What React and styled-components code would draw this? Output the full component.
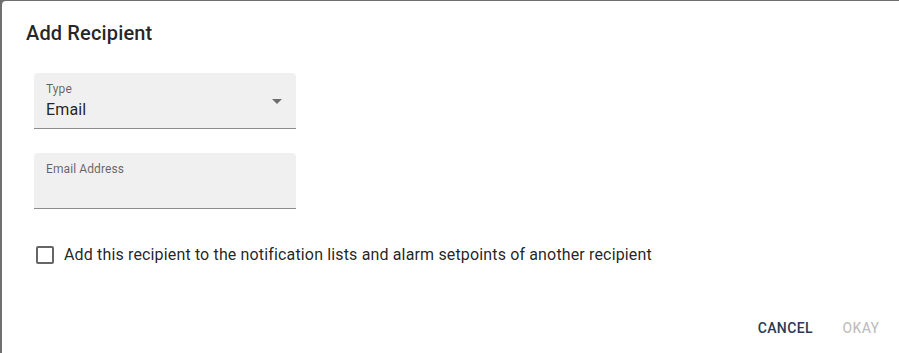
import styled, { createGlobalStyle } from "styled-components";

const GlobalStyle = createGlobalStyle`
  html, body {
    margin: 0;
    padding: 0;
    height: 100%;
    background-color: #6f6f6f;
    font-family: Roboto, "Liberation Sans", Arial, sans-serif;
  }
  #root {
    height: 100%;
  }
`;

const Dialog = styled.div`
  box-sizing: border-box;
  margin: 1px 0 0 2px;
  height: calc(100% - 1px);
  background-color: #fff;
  border-top-left-radius: 4px;
  display: flex;
  flex-direction: column;
`;

const Title = styled.h2`
  margin: 0;
  padding: 16px 24px 0;
  font-size: 20px;
  font-weight: 500;
  line-height: 32px;
  letter-spacing: 0.15px;
  color: rgba(0, 0, 0, 0.87);
`;

const Content = styled.div`
  flex: 1;
  padding: 24px 32px 0;
  display: flex;
  flex-direction: column;
`;

const Field = styled.div`
  box-sizing: border-box;
  width: 262px;
  height: 56px;
  margin-bottom: ${(p) => p.$gap || 0}px;
  padding: 0 7px 0 12px;
  background-color: rgba(0, 0, 0, 0.06);
  border-top-left-radius: 4px;
  border-top-right-radius: 4px;
  border-bottom: 1px solid rgba(0, 0, 0, 0.42);
  display: flex;
  align-items: center;
`;

const FieldBody = styled.div`
  flex: 1;
  align-self: stretch;
  display: flex;
  flex-direction: column;
`;

const Label = styled.label`
  margin-top: 8px;
  font-size: 12px;
  line-height: 17px;
  color: rgba(0, 0, 0, 0.6);
  letter-spacing: 0.1px;
`;

const Value = styled.div`
  font-size: 16px;
  line-height: 23px;
  color: rgba(0, 0, 0, 0.87);
  letter-spacing: 0.15px;
`;

const CheckRow = styled.label`
  margin-top: 34px;
  display: flex;
  align-items: center;
  gap: 10px;
  padding-left: 2px;
  cursor: pointer;
`;

const Box = styled.span`
  box-sizing: border-box;
  width: 18px;
  height: 18px;
  border: 2px solid rgba(0, 0, 0, 0.6);
  border-radius: 2px;
`;

const CheckText = styled.span`
  font-size: 16px;
  line-height: 24px;
  color: rgba(0, 0, 0, 0.87);
  letter-spacing: 0.15px;
`;

const Actions = styled.div`
  display: flex;
  justify-content: flex-end;
  gap: 8px;
  padding: 8px 6px 7px 8px;
`;

const Button = styled.button`
  min-width: 64px;
  height: 36px;
  padding: 6px 8px;
  border: none;
  background: none;
  font-family: inherit;
  font-size: 14px;
  font-weight: 500;
  letter-spacing: 0.4px;
  text-transform: uppercase;
  color: ${(p) => (p.disabled ? "rgba(0, 0, 0, 0.26)" : "#2b3a55")};
  cursor: ${(p) => (p.disabled ? "default" : "pointer")};
`;

const ArrowIcon = () => (
  <svg width="24" height="24" viewBox="0 0 24 24" fill="rgba(0,0,0,0.54)">
    <path d="M7 10l5 5 5-5z" />
  </svg>
);

export default function App() {
  return (
    <>
      <GlobalStyle />
      <Dialog>
        <Title>Add Recipient</Title>
        <Content>
          <Field $gap={24}>
            <FieldBody>
              <Label>Type</Label>
              <Value>Email</Value>
            </FieldBody>
            <ArrowIcon />
          </Field>
          <Field>
            <FieldBody>
              <Label>Email Address</Label>
            </FieldBody>
          </Field>
          <CheckRow>
            <Box />
            <CheckText>
              Add this recipient to the notification lists and alarm setpoints of another recipient
            </CheckText>
          </CheckRow>
        </Content>
        <Actions>
          <Button>Cancel</Button>
          <Button disabled>Okay</Button>
        </Actions>
      </Dialog>
    </>
  );
}
